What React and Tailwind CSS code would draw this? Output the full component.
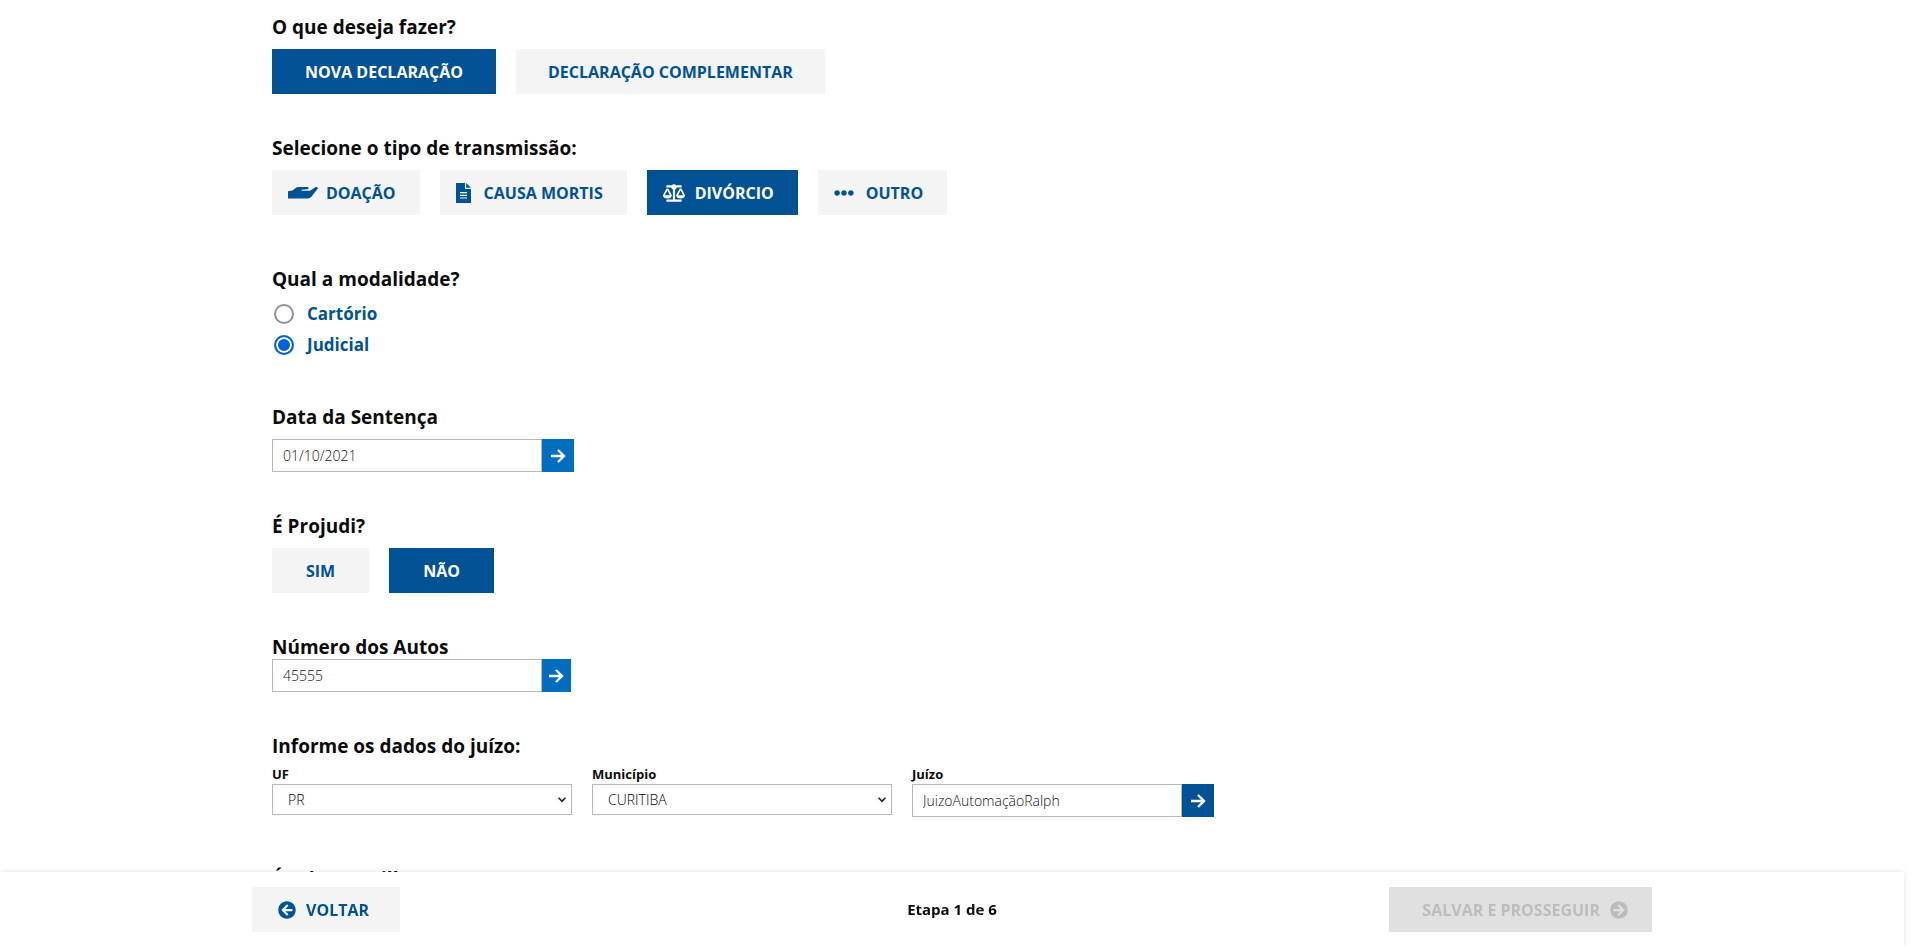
import { FaArrowCircleLeft, FaArrowCircleRight, FaBalanceScale, FaEllipsisH } from "react-icons/fa";

function HandIcon() {
  return (
    <svg width="30" height="12" viewBox="0 0 30 12" fill="currentColor" aria-hidden="true">
      <path d="M0 4.200 4.500 3.600 8 .8C8.700 .2 9.500 0 10.500 0h8.800c1.500 0 1.700 2 .2 2.200l-6 .6v.9h7.200c1.200 0 2-.4 2.800-1L27.300.3c1.500-1 3.300.1 2.300 1.500L24 9c-1.200 1.600-2.500 2.400-4.500 2.400H0z" />
    </svg>
  );
}

function DocIcon() {
  return (
    <svg width="15" height="20" viewBox="0 0 15 20" aria-hidden="true">
      <path fill="currentColor" fillRule="evenodd" d="M0 0h9v6h6v14H0zM4 9v1.200h7V9zm0 2.700v1.200h7v-1.200zm0 2.700v1.200h7v-1.200z" />
      <path fill="currentColor" d="M10.200 0 15 4.800h-4.800z" />
    </svg>
  );
}

function Arrow() {
  return (
    <svg width="15" height="14" viewBox="0 0 15 14" fill="none" stroke="currentColor" strokeWidth="2.400" aria-hidden="true">
      <path d="M0 7h13M7 1l6 6-6 6" />
    </svg>
  );
}

function Choice({ selected, className = "px-[34px]", children }) {
  const tone = selected ? "bg-[#005295] text-white" : "bg-[#f4f4f4] text-[#005295]";
  return (
    <button type="button" aria-pressed={!!selected} className={`flex h-[45px] items-center text-base font-bold ${tone} ${className}`}>
      {children}
    </button>
  );
}

const heading = "text-[19px] leading-6 font-bold";
const smallLabel = "text-[13px] leading-5 font-bold";

function InputGo({ id, value, className = "w-8 bg-[#006ebf]" }) {
  return (
    <div className="flex">
      <input id={id} defaultValue={value} className="h-[33px] w-[270px] border border-[#b8b8b8] bg-white px-2.5 text-sm font-light text-[#111] outline-none" />
      <button type="button" aria-label="Confirmar" className={`flex h-[33px] items-center justify-center text-white ${className}`}>
        <Arrow />
      </button>
    </div>
  );
}

function SelectField({ id, label, value }) {
  return (
    <div className="flex w-[300px] flex-col">
      <label htmlFor={id} className={smallLabel}>{label}</label>
      <div className="grid items-center">
        <select id={id} defaultValue={value} className="col-start-1 row-start-1 h-[31px] w-full appearance-none border border-[#b8b8b8] bg-white px-[15px] text-sm font-light text-black outline-none">
          <option>{value}</option>
        </select>
        <svg className="pointer-events-none col-start-1 row-start-1 mr-1.5 justify-self-end" width="8" height="6" viewBox="0 0 8 6" fill="none" stroke="#222" strokeWidth="1.600" aria-hidden="true">
          <path d="m.6.8 3.400 3.600L7.400.8" />
        </svg>
      </div>
    </div>
  );
}

function Radio({ label, checked }) {
  return (
    <label className="flex h-[31px] items-center gap-[13px] pl-0.5 text-[17px] font-bold text-[#005295]">
      <input
        type="radio"
        name="modalidade"
        defaultChecked={checked}
        className="size-5 appearance-none rounded-full border-2 border-[#8f8f9d] bg-white checked:border-[#0060df] checked:bg-[#0060df] checked:shadow-[inset_0_0_0_2px_#fff]"
      />
      {label}
    </label>
  );
}

export default function App() {
  return (
    <div className="h-screen overflow-hidden bg-white pr-4 font-['Open_Sans',sans-serif] text-[#0b0b0b]">
      <main className="mx-auto max-w-[1400px] px-5 pt-[15px]">
        <section>
          <h2 className={`${heading} mb-2.5`}>O que deseja fazer?</h2>
          <div className="flex gap-5">
            <Choice selected className="px-[33px]">NOVA DECLARAÇÃO</Choice>
            <Choice className="px-8">DECLARAÇÃO COMPLEMENTAR</Choice>
          </div>
        </section>

        <section className="mt-[42px]">
          <h2 className={`${heading} mb-2.5`}>Selecione o tipo de transmissão:</h2>
          <div className="flex gap-5">
            <Choice className="gap-2 pr-6 pl-4"><HandIcon />DOAÇÃO</Choice>
            <Choice className="gap-[13px] pr-6 pl-4"><DocIcon />CAUSA MORTIS</Choice>
            <Choice selected className="gap-2.5 pr-6 pl-4"><FaBalanceScale size={22} />DIVÓRCIO</Choice>
            <Choice className="gap-3 pr-6 pl-4"><FaEllipsisH size={20} />OUTRO</Choice>
          </div>
        </section>

        <fieldset className="mt-[52px]">
          <legend className={`${heading} mb-[7px]`}>Qual a modalidade?</legend>
          <Radio label="Cartório" />
          <Radio label="Judicial" checked />
        </fieldset>

        <section className="mt-[45px]">
          <label htmlFor="data" className={`${heading} mb-2.5 block`}>Data da Sentença</label>
          <InputGo id="data" value="01/10/2021" />
        </section>

        <section className="mt-[42px]">
          <h2 className={`${heading} mb-2.5`}>É Projudi?</h2>
          <div className="flex gap-5">
            <Choice>SIM</Choice>
            <Choice selected>NÃO</Choice>
          </div>
        </section>

        <section className="mt-[42px]">
          <label htmlFor="autos" className={`${heading} block`}>Número dos Autos</label>
          <InputGo id="autos" value="45555" className="w-[29px] bg-[#006ebf]" />
        </section>

        <section className="mt-[42px]">
          <h2 className={`${heading} mb-1.5`}>Informe os dados do juízo:</h2>
          <div className="flex gap-5">
            <SelectField id="uf" label="UF" value="PR" />
            <SelectField id="municipio" label="Município" value="CURITIBA" />
            <div className="flex flex-col">
              <label htmlFor="juizo" className={smallLabel}>Juízo</label>
              <InputGo id="juizo" value="JuizoAutomaçãoRalph" className="w-8 bg-[#005295]" />
            </div>
          </div>
        </section>

        <section className="mt-[50px]">
          <h2 className={heading}>É sobrepartilha?</h2>
        </section>
      </main>

      <footer className="fixed right-4 bottom-0 left-0 bg-white py-[15px] shadow-[0_0_5px_rgba(0,0,0,0.12)]">
        <div className="mx-auto grid max-w-[1400px] grid-cols-3 items-center">
          <Choice className="gap-2.5 justify-self-start pr-[31px] pl-[26px]"><FaArrowCircleLeft size={18} />VOLTAR</Choice>
          <p className="text-center text-[15px] font-bold">Etapa 1 de 6</p>
          <button type="button" disabled className="flex h-[45px] items-center gap-2.5 justify-self-end bg-[#e0e0e0] pr-6 pl-[33px] text-base font-bold text-[#bcbcbc]">
            SALVAR E PROSSEGUIR
            <FaArrowCircleRight size={18} />
          </button>
        </div>
      </footer>
    </div>
  );
}
